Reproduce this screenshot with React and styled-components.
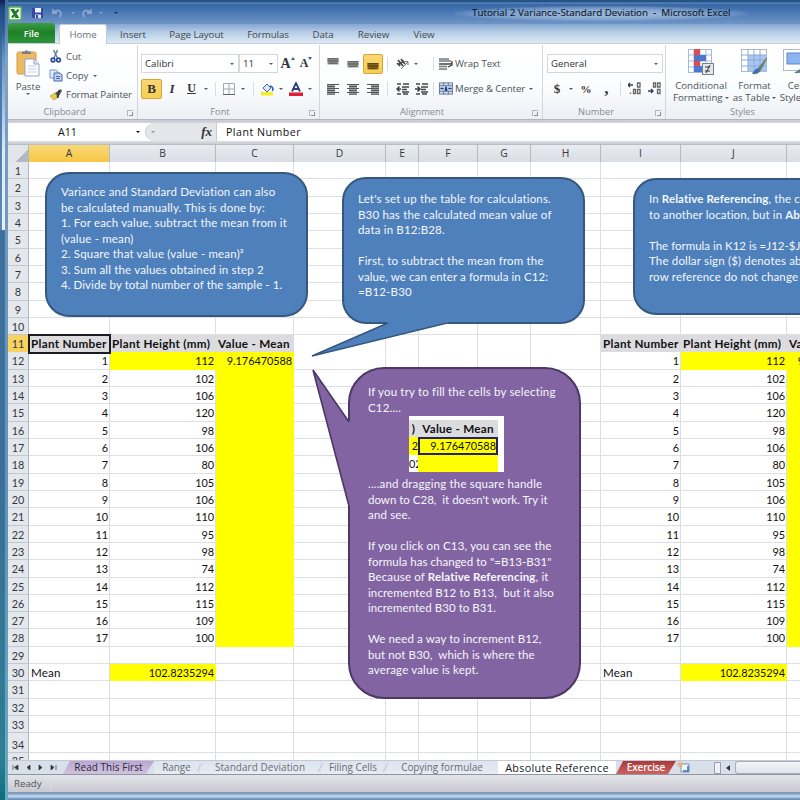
import React from 'react';
import styled, { createGlobalStyle } from 'styled-components';

const Global = createGlobalStyle`
  *{box-sizing:border-box}
  html,body{margin:0;padding:0;width:800px;height:800px;overflow:hidden}
  body{font-family:"Open Sans","Noto Sans",sans-serif;font-size:9.7px;color:#4d525a}
`;

/* ---------- window frame ---------- */
const Desktop = styled.div`
  width:800px;height:800px;overflow:hidden;display:grid;grid-template-columns:8px 792px;
  background:#2d5d92;
`;
const LeftEdge = styled.div`
  display:grid;grid-template-columns:2px 3px 3px;
  background:linear-gradient(#0f1d55 0,#1f4a80 8px,#4577ad 60px,#5f88b4 229px,#3f6f9f 231px,#3b7097 520px,#2d7f94 760px,#0f6d7c 800px);
`;
const EdgeGlow = styled.i`
  grid-column:2;height:230px;background:linear-gradient(transparent 30px,#a9c3dd 110px,#dde9f3 150px,#e6eff6);
`;
const EdgeRim = styled.i`grid-column:3;background:linear-gradient(#3e6aa3,#7ea3cb 60px,#6f98c0 230px,#5f95b8 500px,#6aa9c1);`;
const Window = styled.div`
  display:grid;grid-template-rows:24px 20px 75px 4px 18px 4px 615px 15px 17px 8px;width:792px;overflow:hidden;
`;
const TitleBar = styled.div`
  display:flex;align-items:center;padding:2px 0 0;
  background:linear-gradient(#245487 0,#245487 2px,#6b93c1 3px,#3967a5 4px,#4373b0 10px,#7095c6 24px);
`;
const QuickAccess = styled.div`
  display:flex;align-items:center;width:446px;
  > svg:first-child{margin-right:10px;}
`;
const Title = styled.div`
  font-size:9.8px;color:#101b2e;letter-spacing:0;white-space:pre;line-height:14px;padding:0 18px;height:15px;
  background:radial-gradient(ellipse at center,rgba(205,222,242,.55) 30%,rgba(205,222,242,.28) 60%,transparent 74%);
  -webkit-text-stroke:.15px #101b2e;
`;
const TabStrip = styled.div`
  display:flex;align-items:flex-end;background:linear-gradient(#84a6d1,#b4cce6 8px,#dde9f4);border-bottom:1px solid #c7d0dc;
`;
const FileTab = styled.div`
  width:47px;height:20px;background:linear-gradient(#3b9d42,#1f8029 45%,#2c9438);color:#fff;text-align:center;line-height:22px;font-size:9.2px;font-weight:600;
  border-radius:3px 3px 0 0;
`;
const Tab = styled.div`
  width:${p => p.$w}px;height:19px;line-height:21px;text-align:center;letter-spacing:-.05px;color:#414750;
  ${p => p.$active && 'background:#fff;border:1px solid #c3ccd8;border-bottom:0;margin-left:4px;margin-bottom:-1px;height:20px;border-radius:3px 3px 0 0;color:#6a6f77;line-height:19px;'}
`;

/* ---------- ribbon ---------- */
const Ribbon = styled.div`
  display:flex;background:linear-gradient(#fff,#fcfdfe 55%,#eceff3);overflow:hidden;
`;
const Group = styled.div`
  width:${p => p.$w}px;flex:none;height:74px;margin-top:1px;border-right:1px solid #d3d7dd;display:flex;flex-direction:column;position:relative;
`;
const Body = styled.div`height:60px;display:flex;flex-direction:${p => (p.$row ? 'row' : 'column')};padding-left:${p => p.$pl || 0}px;`;
const Caption = styled.div`
  height:14px;line-height:14px;text-align:center;color:#858b94;font-size:9.3px;padding-right:${p => p.$r || 0}px;
`;
const Launcher = styled.i`
  position:absolute;right:4px;bottom:3px;width:6px;height:6px;border-top:1px solid #b3b8c0;border-left:1px solid #b3b8c0;
  &::after{content:"";position:absolute;right:0;bottom:0;width:3px;height:3px;border-right:1px solid #8b919b;border-bottom:1px solid #8b919b;}
`;
const Caret = styled.i`
  display:inline-block;flex:none;width:0;height:0;border:2px solid transparent;border-top:2.5px solid ${p => p.$c || '#555b64'};border-bottom:0;margin:0 ${p => p.$r || 0}px 0 ${p => p.$l || 0}px;vertical-align:2px;
`;
const PasteButton = styled.div`
  width:40px;display:flex;flex-direction:column;align-items:center;padding:4px 0 0 0;line-height:13px;
  svg{margin-bottom:3px;}
`;
const ClipList = styled.div`display:flex;flex-direction:column;padding-top:2px;`;
const ClipItem = styled.div`
  display:flex;align-items:center;height:19px;white-space:nowrap;gap:3px;letter-spacing:-.12px;
  svg{flex:none;}
`;
const ToolRow = styled.div`display:flex;align-items:center;height:25px;margin-top:${p => p.$mt || 0}px;`;
const Combo = styled.div`
  width:${p => p.$w}px;height:19px;border:1px solid #d4d8de;background:#fff;display:flex;align-items:center;justify-content:space-between;padding:0 4px 0 3px;color:#2e3238;
`;
const Slot = styled.div`
  width:${p => p.$w}px;height:20px;display:flex;align-items:center;justify-content:center;flex:none;border-radius:2px;
  ${p => p.$on && 'background:linear-gradient(#fbd675,#f7cf50);border:1px solid #d6a438;'}
`;
const Glyph = styled.span`
  font:700 ${p => p.$s || 12}px "Liberation Serif",serif;font-style:${p => (p.$it ? 'italic' : 'normal')};text-decoration:${p => (p.$u ? 'underline' : 'none')};color:#333;
`;
const Mark = styled.i`
  width:0;height:0;border:2px solid transparent;align-self:flex-start;margin-top:3px;
  ${p => (p.$down ? 'border-top:3px solid #3d5f9c;border-bottom:0;' : 'border-bottom:3px solid #3d5f9c;border-top:0;')}
`;
const Sep = styled.i`width:1px;height:14px;background:#d9dce1;margin:0 ${p => p.$m || 4}px;flex:none;`;
const Label = styled.span`white-space:nowrap;letter-spacing:-.07px;`;
const BigButton = styled.div`
  width:${p => p.$w}px;flex:none;display:flex;flex-direction:column;align-items:center;text-align:center;line-height:11.5px;padding-top:4px;white-space:nowrap;
  svg{margin-bottom:5px;}
`;
const Band = styled.div`background:linear-gradient(${p => p.$c});`;

/* ---------- formula bar ---------- */
const FormulaBar = styled.div`display:flex;align-items:center;background:#fff;color:#111;font-size:10.6px;`;
const NameBox = styled.div`width:137px;display:flex;align-items:center;justify-content:space-between;padding:0 5px 0 50px;`;
const FxArea = styled.div`
  width:72px;height:18px;background:#e4e6ea;display:flex;align-items:center;justify-content:space-between;padding:0 4px 0 5px;border-radius:9px 0 0 9px;border:1px solid #c8ccd2;border-width:0 1px 0 1px;
`;
const FormulaText = styled.div`padding-left:9px;letter-spacing:.5px;`;

/* ---------- sheet ---------- */
const widths = [81, 106, 78, 92, 33, 59, 53, 70, 80, 106, 78];
const template = widths.map(w => w + 'px').join(' ');
const Sheet = styled.div`
  position:relative;width:792px;overflow:hidden;background:#fff;font-family:Lato,"Open Sans",sans-serif;font-size:11px;color:#111;
`;
const HeadRow = styled.div`display:grid;grid-template-columns:21px ${template};height:17px;width:857px;border-bottom:1px solid #9da5b0;`;
const ColHead = styled.div`
  text-align:center;line-height:17px;font-family:"Open Sans",sans-serif;font-size:10.3px;color:#33383f;border-right:1px solid #b4bac4;
  background:${p => (p.$on ? 'linear-gradient(#f9d977,#f6c746)' : 'linear-gradient(#e9ecf1,#d9dde4)')};
`;
const Corner = styled.div`
  background:linear-gradient(135deg,#e2e6eb 66%,#b2b9c4 67%);border-right:1px solid #b4bac4;
`;
const Row = styled.div`display:grid;grid-template-columns:21px ${template};height:${p => p.$h || 17.32}px;width:857px;`;
const RowHead = styled.div`
  background:${p => (p.$on ? '#f8d25e' : '#e4e7ec')};border-right:1px solid #b0b6c0;border-bottom:1px solid #c3c8d0;
  text-align:center;font-size:10.8px;line-height:${p => p.$lh || 17}px;color:#33383f;overflow:hidden;
`;
const Cell = styled.div`
  border-right:1px solid ${p => p.$fill || '#dcdfe5'};border-bottom:1px solid ${p => p.$fill || '#dcdfe5'};
  background:${p => p.$fill || '#fff'};text-align:${p => p.$align || 'right'};font-weight:${p => (p.$bold ? 700 : 400)};
  font-size:${p => (p.$bold ? 11.7 : p.$align ? 11.6 : 10.9)}px;letter-spacing:${p => (p.$bold ? 0.28 : p.$align ? 0.15 : -0.05)}px;line-height:17px;
  padding:0 1px 0 ${p => (p.$align === 'left' ? 2 : 0)}px;white-space:nowrap;overflow:hidden;
  ${p => p.$sel && 'outline:2px solid #1b1b24;outline-offset:-1px;z-index:1;overflow:visible;'}
`;

/* ---------- callouts ---------- */
const Overlay = styled.div`
  position:absolute;left:${p => p.$x}px;top:${p => p.$y}px;width:${p => p.$w}px;height:${p => p.$h}px;z-index:2;
  background:${p => p.$c};border:2px solid ${p => p.$b};border-radius:${p => p.$r}px;color:#f4f7fc;
  padding:${p => p.$pt}px 0 0 ${p => p.$pl}px;
`;
const Line = styled.div`
  height:15.5px;line-height:15.5px;white-space:pre;font-size:11.5px;letter-spacing:${p => (p.$ls === undefined ? 0.17 : p.$ls)}px;
`;
const Tail = styled.svg`position:absolute;left:${p => p.$x}px;top:${p => p.$y}px;z-index:3;overflow:visible;`;
const Snip = styled.div`
  width:95px;height:56px;margin:1px 0 4px 41px;background:#fff;color:#111;display:grid;grid-template-columns:9px 80px;grid-template-rows:4px 17px 18px 17px;overflow:hidden;
`;
const SnipCell = styled.div`
  background:${p => p.$bg || '#fff'};font-size:${p => (p.$b ? 11.7 : 10.9)}px;letter-spacing:${p => (p.$b ? 0.25 : 0)}px;font-weight:${p => (p.$b ? 700 : 400)};line-height:17px;text-align:${p => (p.$b ? 'center' : 'right')};
  white-space:nowrap;overflow:hidden;${p => p.$sel && 'border:2px solid #26215f;line-height:14px;'}
`;

/* ---------- bottom bars ---------- */
const SheetTabs = styled.div`
  display:flex;align-items:stretch;background:#d8e0e9;border-top:1px solid #c2c9d2;border-bottom:1px solid #8e96a2;font-size:9.8px;color:#636a74;
`;
const Nav = styled.div`width:55px;display:flex;align-items:center;padding-left:4px;`;
const SheetTab = styled.div`
  width:${p => p.$w}px;flex:none;line-height:13px;text-align:center;white-space:nowrap;letter-spacing:${p => p.$ls || 0}px;font-size:${p => p.$s || 9.9}px;font-weight:${p => p.$weight || 400};
  color:${p => p.$color || '#666d77'};background:${p => p.$bg || 'linear-gradient(#dce4ec,#e7ecf1)'};
  clip-path:${p => (p.$slant ? 'polygon(7px 0,100% 0,calc(100% - 8px) 100%,0 100%)' : 'none')};
`;
const Slash = styled.i`width:1px;background:#bcc4ce;transform:skewX(-30deg);margin:2px 0;`;
const ScrollBox = styled.div`display:flex;align-items:center;flex:1;margin-left:22px;`;
const Splitter = styled.i`width:7px;height:12px;border:1px solid #99a2ae;background:#eef1f5;`;
const LeftArrow = styled.i`border:3px solid transparent;border-right:4px solid #333;border-left:0;margin:0 5px 0 5px;`;
const Thumb = styled.i`flex:1;height:13px;border:1px solid #a5aebb;border-right:0;border-radius:3px 0 0 3px;background:linear-gradient(#f2f5f8,#dfe5ec);`;
const Status = styled.div`
  display:flex;align-items:center;background:linear-gradient(#e3e4e9,#c9cad1);padding-left:6px;color:#50555d;
`;
const BottomEdge = styled.div`background:linear-gradient(#7f9cbc 0,#7f9cbc 2px,#b5cfe9 3px,#b5cfe9 5px,#6d8fb5 7px);`;

/* ---------- icons ---------- */
const ExcelIcon = () => (
  <svg width="14" height="15" viewBox="0 0 14 15"><rect x=".75" y="1" width="12.500" height="13" rx="1.500" fill="#f3fbf0" stroke="#58b052" strokeWidth="1.500" /><path d="M4 4h1.500l4 7H8zM10.500 3.500L4 11.500" stroke="#1f7a2a" strokeWidth="2" fill="#2b8a35" /></svg>
);
const SaveIcon = () => (
  <svg width="12" height="12" viewBox="0 0 12 12"><path d="M0 1h11v10H1L0 10z" fill="#3847a5" /><rect x="3" y="1" width="6" height="4.500" fill="#f1f4fb" /><rect x="3" y="7.500" width="6" height="3.500" fill="#dfe5f2" /><rect x="4" y="8" width="2" height="3" fill="#3847a5" /></svg>
);
const TurnIcon = ({ flip }) => (
  <svg width="11" height="10" viewBox="0 0 11 10"><g transform={flip ? 'translate(11 0) scale(-1 1)' : undefined}><path d="M1 1v4h4M1.500 4.500C4 1.500 9 2 9 6c0 1.500-1 2.500-2 3" fill="none" stroke="#88a6d0" strokeWidth="1.800" /></g></svg>
);
const PasteIcon = () => (
  <svg width="26" height="28" viewBox="0 0 26 28"><rect x="2" y="3" width="19" height="22" rx="1.500" fill="#eebb62" stroke="#d39a43" /><path d="M7 5V2.500h3Q11.500-.5 13 2.500h3V5z" fill="#7b7f86" /><path d="M10 10h9l5 5v12H10z" fill="#fff" stroke="#8ba4cc" /><path d="M19 10v5h5" fill="#dfe8f5" stroke="#8ba4cc" /><path d="M12.500 17h9M12.500 20h9M12.500 23h9" stroke="#c0cee6" /></svg>
);
const CutIcon = () => (
  <svg width="12" height="13" viewBox="0 0 12 13"><path d="M3.500 0l4 8M7.500 0L4 8" stroke="#6d7f9f" strokeWidth="1.500" /><circle cx="3" cy="10" r="1.800" fill="none" stroke="#2c4c9b" strokeWidth="1.700" /><circle cx="8.500" cy="10" r="1.800" fill="none" stroke="#2c4c9b" strokeWidth="1.700" /></svg>
);
const CopyIcon = () => (
  <svg width="14" height="13" viewBox="0 0 14 13"><path d="M1 1h6l2 2v6H1z" fill="#e5edfa" stroke="#7592cd" /><path d="M5 4h6l2 2v6H5z" fill="#c3d5f3" stroke="#4165b4" /><path d="M7 7.500h4M7 9.500h4" stroke="#4567b0" /></svg>
);
const BrushIcon = () => (
  <svg width="14" height="13" viewBox="0 0 14 13"><path d="M1 8l5-3 3 4-4 3z" fill="#f0cb45" stroke="#a8933d" strokeWidth=".6" /><path d="M6 5l6-4 1 2-4 6z" fill="#59624c" /><path d="M10.500 2L8.500 10" stroke="#33382c" strokeWidth="1.800" /></svg>
);
const AlignIcon = ({ k }) => {
  const v = { t: 1, m: 4, b: 6 }[k];
  if (v !== undefined) return (
    <svg width="12" height="14" viewBox="0 0 12 14"><rect x=".5" y={v} width="11" height="6.500" fill={k === 'b' ? '#8a6a2a' : '#8f8f8e'} /><path d={`M.5 ${v + .6}h11M.5 ${v + 3}h11M2 ${v + 5.400}h8`} stroke={k === 'b' ? '#5f4410' : '#6a6a6a'} strokeWidth="1.300" /></svg>
  );
  const o = { l: 0, c: 2, r: 4 }[k];
  return <svg width="12" height="12" viewBox="0 0 12 12"><rect x={o} y="1" width="8" height="10" fill="#a4a4a4" /><path d={`M0 1.500h12M${o} 3.500h8M0 5.500h12M${o} 7.500h8M0 9.500h12M${o} 11.300h8`} stroke="#555" strokeWidth="1.100" /></svg>;
};
const IndentIcon = ({ right }) => (
  <svg width="13" height="12" viewBox="0 0 13 12"><path d="M1 1h4M7 1h6M6 4h7M6 6.500h5M6 9h7M1 11h4M7 11h5" stroke="#444" strokeWidth="1.600" /><path d={right ? 'M0 6h4M2.500 3.500L5 6 2.500 8.500' : 'M5 6H1M3.500 3.500L1 6l2.500 2.500'} fill="none" stroke="#3a3f48" strokeWidth="1.500" /></svg>
);
const OrientIcon = () => (
  <svg width="14" height="13" viewBox="0 0 14 13"><path d="M2 3l5 6M1 6l3 3M5 2l4 5M3 7l5-3" stroke="#444" strokeWidth="1.700" /><path d="M5 12l7-7M12 8V4.500H8.500" stroke="#777" fill="none" /></svg>
);
const WrapIcon = () => (
  <svg width="14" height="14" viewBox="0 0 14 14"><path d="M0 2h10M0 4h12M0 9.500h8M0 12h8" stroke="#74787f" strokeWidth="1.700" /><path d="M0 7h11q2 0 2-2M13 4v4L9 10" stroke="#444" fill="none" strokeWidth="1.300" /></svg>
);
const MergeIcon = () => (
  <svg width="14" height="13" viewBox="0 0 15 13"><rect x=".5" y=".5" width="14" height="12" fill="#d2def1" stroke="#67799c" /><path d="M0 3.500h15M0 9.500h15M5 0v3M10 0v3M5 10v3M10 10v3" stroke="#5c719c" /><path d="M1.500 6.500h3.500M13.500 6.500h-3.500M6.500 9l1-4.500 1 4.500" stroke="#263c72" strokeWidth="1.500" fill="none" /></svg>
);
const BorderIcon = () => (
  <svg width="12" height="12" viewBox="0 0 12 12"><path d="M.5.5h11v11H.5zM6 0v12M0 6h12" fill="none" stroke="#a3a8b0" /><path d="M0 11.500h12" stroke="#666" /></svg>
);
const FillIcon = () => (
  <svg width="13" height="14" viewBox="0 0 13 14"><rect y="10" width="12" height="3.500" fill="#f3ed2e" /><path d="M2 6l4-4 4 4-4 4z" fill="#dbe6f6" stroke="#48638f" /><path d="M9 4q4 1 2.500 5" stroke="#2d5ebb" strokeWidth="1.600" fill="none" /></svg>
);
const FontColorIcon = () => (
  <svg width="14" height="14" viewBox="0 0 14 14"><rect y="10.500" width="14" height="3.500" fill="#dc2037" /><path d="M3 9.500L7 1l4 8.500M4.500 7h5" stroke="#2a3f7a" strokeWidth="1.800" fill="none" /></svg>
);
const DecimalIcon = ({ dec }) => (
  <svg width="14" height="13" viewBox="0 0 14 13"><path d={dec ? 'M0 9h5M3 7l2 2-2 2' : 'M0 3h5M2 1L0 3l2 2'} stroke="#2f3f66" fill="none" strokeWidth="1.400" /><g fill="none" stroke="#666" strokeWidth="1.300"><path d="M9.500 1h2.500v4H9.500zM9.500 7.500h2.500v4H9.500z" /><path d={dec ? 'M5.500 1h2v4h-2z' : 'M5.500 7.500h2v4h-2zM2.500 10.500v1.500'} /></g></svg>
);
const CondIcon = () => (
  <svg width="26" height="26" viewBox="0 0 26 26"><rect x=".5" y=".5" width="23" height="23" fill="#fff" stroke="#a7b9d9" /><path d="M0 6h24M0 12h24M0 18h24M6 0v24M12 0v24M18 0v24" stroke="#a7b9d9" /><path d="M6 0h6v6H6zM6 12h6v5H6z" fill="#e04b4b" /><path d="M6 6h12v6H6zM6 17h8v6H6z" fill="#4a78d0" /><rect x="14.500" y="14.500" width="11" height="11" fill="#e4e8ee" stroke="#777f8b" /><path d="M17 18h5M17 22h5M22 16l-4 8" stroke="#333" /></svg>
);
const TableIcon = () => (
  <svg width="27" height="26" viewBox="0 0 27 26"><rect x=".5" y=".5" width="25" height="22" fill="#fff" stroke="#a9b9d6" /><path d="M7 6h18v16H7z" fill="#a8c7f3" /><path d="M0 6h25M0 11h25M0 17h25M7 0v22M13 0v22M19 0v22" stroke="#8ea9d6" /><path d="M26 8l-9 11-3 3-3 3q7 1 9-4l6-11z" fill="#6a8068" /><path d="M16 19l-5 5q6 1 8-3z" fill="#3b70c8" /></svg>
);
const StyleIcon = () => (
  <svg width="27" height="26" viewBox="0 0 27 26"><rect x=".5" y=".5" width="26" height="21" fill="#fff" stroke="#a9b9d6" /><rect x="4" y="4" width="22" height="11" fill="#8ab5f0" stroke="#5a85ce" /><path d="M27 10L17 20l-6 4q8 1 11-4z" fill="#5f7c8e" /></svg>
);
const NavIcon = () => (
  <svg width="46" height="9" viewBox="0 0 46 9"><path d="M1 2v5M6 2v5L2.500 4.500zM18 2v5l-3-2.500zM27 2v5l3-2.500zM39 2v5l3-2.500zM44 2v5" fill="#333" stroke="#333" strokeWidth=".7" /></svg>
);
const NewSheetIcon = () => (
  <svg width="16" height="13" viewBox="0 0 16 13"><path d="M5 3h8v8H5z" fill="#f4f7fb" stroke="#6e8fc4" /><path d="M12 5v5H7" fill="none" stroke="#3e6db5" strokeWidth="1.500" /><path d="M4 0v7M.5 3.500h7M1.500 1l5 5M6.500 1l-5 5" stroke="#dfb274" /></svg>
);

/* ---------- data ---------- */
const heights = [112, 102, 106, 120, 98, 106, 80, 105, 106, 110, 95, 98, 74, 112, 115, 109, 100];
const Y = '#ffff00';
const G = '#dcdcdf';
function cellsFor(n) {
  const cells = widths.map(() => ({}));
  const place = offset => {
    if (n === 11) {
      ['Plant Number', 'Plant Height (mm)', 'Value - Mean'].forEach((t, i) => {
        cells[offset + i] = { t, $bold: true, $fill: G, $align: 'left' };
      });
    }
    if (n >= 12 && n <= 28) {
      cells[offset] = { t: n - 11 };
      cells[offset + 1] = { t: heights[n - 12], $fill: n === 12 ? Y : undefined };
      cells[offset + 2] = { t: n === 12 ? '9.176470588' : '', $fill: Y };
    }
    if (n === 30) {
      cells[offset] = { t: 'Mean', $align: 'left' };
      cells[offset + 1] = { t: '102.8235294', $fill: Y };
    }
  };
  place(0);
  place(8);
  if (n === 11) cells[0].$sel = true;
  return cells;
}

const tabs = [['Insert', 52], ['Page Layout', 75], ['Formulas', 68], ['Data', 42], ['Review', 59], ['View', 42]];
const blue = { $c: '#4e80bc', $b: '#36587f' };

export default function App() {
  return (
    <>
      <Global />
      <Desktop>
        <LeftEdge><EdgeGlow /><EdgeRim /></LeftEdge>
        <Window>
          <TitleBar>
            <QuickAccess>
              <ExcelIcon /><SaveIcon />
              <Slot $w={27}><TurnIcon /></Slot><Caret $c="#86a2ca" /><Slot $w={22}><TurnIcon flip /></Slot><Caret $l={2} $c="#86a2ca" /><Caret $l={11} $c="#1c2c49" />
            </QuickAccess>
            <Title>Tutorial 2 Variance-Standard Deviation  -  Microsoft Excel</Title>
          </TitleBar>
          <TabStrip>
            <FileTab>File</FileTab>
            <Tab $w={48} $active>Home</Tab>
            {tabs.map(([t, w]) => <Tab key={t} $w={w}>{t}</Tab>)}
          </TabStrip>
          <Ribbon>
            <Group $w={130}>
              <Body $row>
                <PasteButton><PasteIcon />Paste<Caret /></PasteButton>
                <ClipList>
                  <ClipItem><Slot $w={15}><CutIcon /></Slot>Cut</ClipItem>
                  <ClipItem><Slot $w={15}><CopyIcon /></Slot>Copy <Caret $l={2} /></ClipItem>
                  <ClipItem><Slot $w={15}><BrushIcon /></Slot>Format Painter</ClipItem>
                </ClipList>
              </Body>
              <Caption $r={16}>Clipboard</Caption><Launcher />
            </Group>
            <Group $w={182}>
              <Body $pl={3}>
                <ToolRow $mt={6}>
                  <Combo $w={98}>Calibri<Caret /></Combo><Combo $w={39}>11<Caret /></Combo>
                  <Slot $w={19}><Glyph $s={14}>A</Glyph><Mark /></Slot><Slot $w={18}><Glyph $s={12}>A</Glyph><Mark $down /></Slot>
                </ToolRow>
                <ToolRow>
                  <Slot $w={21} $on><Glyph $s={13}>B</Glyph></Slot>
                  <Slot $w={20}><Glyph $s={13} $it>I</Glyph></Slot>
                  <Slot $w={19}><Glyph $s={12} $u>U</Glyph></Slot>
                  <Caret $l={3} $r={3} /><Sep /><Slot $w={17}><BorderIcon /></Slot><Caret $l={4} $r={4} /><Sep />
                  <Slot $w={19}><FillIcon /></Slot><Caret $l={2} /><Slot $w={25}><FontColorIcon /></Slot><Caret />
                </ToolRow>
              </Body>
              <Caption $r={17}>Font</Caption><Launcher />
            </Group>
            <Group $w={223}>
              <Body $pl={3}>
                <ToolRow $mt={6}>
                  <Slot $w={20}><AlignIcon k="t" /></Slot><Slot $w={20}><AlignIcon k="m" /></Slot><Slot $w={20} $on><AlignIcon k="b" /></Slot>
                  <Sep $m={4} /><Slot $w={22}><OrientIcon /></Slot><Caret $r={13} /><Sep $m={2} />
                  <Slot $w={19}><WrapIcon /></Slot><Label>Wrap Text</Label>
                </ToolRow>
                <ToolRow>
                  <Slot $w={20}><AlignIcon k="l" /></Slot><Slot $w={20}><AlignIcon k="c" /></Slot><Slot $w={20}><AlignIcon k="r" /></Slot>
                  <Sep $m={4} /><Slot $w={20}><IndentIcon /></Slot><Slot $w={19}><IndentIcon right /></Slot><Sep $m={2} />
                  <Slot $w={19}><MergeIcon /></Slot><Label>Merge &amp; Center</Label><Caret $l={4} />
                </ToolRow>
              </Body>
              <Caption $r={18}>Alignment</Caption><Launcher />
            </Group>
            <Group $w={123}>
              <Body $pl={4}>
                <ToolRow $mt={6}><Combo $w={116}>General<Caret /></Combo></ToolRow>
                <ToolRow>
                  <Slot $w={20}><Glyph $s={13}>$</Glyph></Slot><Caret $l={2} $r={3} /><Slot $w={20}><Glyph $s={11}>%</Glyph></Slot>
                  <Slot $w={21}><Glyph $s={16}>,</Glyph></Slot><Sep $m={3} /><Slot $w={22}><DecimalIcon /></Slot><Slot $w={17}><DecimalIcon dec /></Slot>
                </ToolRow>
              </Body>
              <Caption $r={16}>Number</Caption><Launcher />
            </Group>
            <Group $w={170}>
              <Body $row $pl={4}>
                <BigButton $w={62}><CondIcon /><div>Conditional<br />Formatting <Caret /></div></BigButton>
                <BigButton $w={45}><TableIcon /><div>Format<br />as Table <Caret /></div></BigButton>
                <BigButton $w={38}><StyleIcon /><div>Cell<br />Styles <Caret /></div></BigButton>
              </Body>
              <Caption $r={16}>Styles</Caption>
            </Group>
          </Ribbon>
          <Band $c="#9ba2ad,#c8cbd0 1px,#d2d4d9" />
          <FormulaBar>
            <NameBox>A11<Caret $c="#111" /></NameBox>
            <FxArea><Caret $c="#8d929b" /><Glyph $s={13} $it>fx</Glyph></FxArea>
            <FormulaText>Plant Number</FormulaText>
          </FormulaBar>
          <Band $c="#dcdee3,#c9ccd2 3px,#a8aeb8" />
          <Sheet>
            <HeadRow>
              <Corner />
              {widths.map((w, i) => <ColHead key={i} $on={i === 0}>{'ABCDEFGHIJK'[i]}</ColHead>)}
            </HeadRow>
            {Array.from({ length: 35 }, (_, i) => i + 1).map(n => (
              <Row key={n} $h={n === 34 ? 20 : undefined}>
                <RowHead $on={n === 11} $lh={n === 34 ? 23 : n === 35 ? 15 : 17}>{n}</RowHead>
                {cellsFor(n).map(({ t, ...rest }, i) => <Cell key={i} {...rest}>{t}</Cell>)}
              </Row>
            ))}

            <Overlay {...blue} $x={37} $y={27} $w={263} $h={145} $r={24} $pt={10} $pl={14}>
              <Line>Variance and Standard Deviation can also</Line>
              <Line>be calculated manually. This is done by:</Line>
              <Line>1. For each value, subtract the mean from it</Line>
              <Line>(value - mean)</Line>
              <Line>2. Square that value (value - mean)²</Line>
              <Line>3. Sum all the values obtained in step 2</Line>
              <Line $ls={0.07}>4. Divide by total number of the sample - 1.</Line>
            </Overlay>

            <Overlay {...blue} $x={334} $y={32} $w={243} $h={147} $r={24} $pt={12} $pl={14}>
              <Line>Let's set up the table for calculations.</Line>
              <Line>B30 has the calculated mean value of</Line>
              <Line>data in B12:B28.</Line>
              <Line />
              <Line>First, to subtract the mean from the</Line>
              <Line $ls={0.1}>value, we can enter a formula in C12:</Line>
              <Line>=B12-B30</Line>
            </Overlay>
            <Tail $x={303} $y={176} width="140" height="36" viewBox="0 0 140 36">
              <path d="M76 2L1 35L137 2V0H76z" fill="#4e80bc" /><path d="M77 2L1 35L136 2" fill="none" stroke="#36587f" strokeWidth="1.600" />
            </Tail>

            <Overlay {...blue} $x={625} $y={33} $w={260} $h={137} $r={23} $pt={11} $pl={14}>
              <Line $ls={0.1}>In <b>Relative Referencing</b>, the cell</Line>
              <Line $ls={0.1}>to another location, but in <b>Absolute</b></Line>
              <Line />
              <Line $ls={0}>The formula in K12 is =J12-$J$30</Line>
              <Line>The dollar sign ($) denotes absolute</Line>
              <Line>row reference do not change</Line>
            </Overlay>

            <Overlay $c="#8364a2" $b="#4c3864" $x={340} $y={222} $w={233} $h={332} $r={36} $pt={15} $pl={18}>
              <Line>If you try to fill the cells by selecting</Line>
              <Line>C12....</Line>
              <Snip>
                <SnipCell /><SnipCell />
                <SnipCell $bg={G} $b>)</SnipCell><SnipCell $bg={G} $b>Value - Mean</SnipCell>
                <SnipCell $bg={Y}>2</SnipCell><SnipCell $bg={Y} $sel>9.176470588</SnipCell>
                <SnipCell>02</SnipCell><SnipCell $bg={Y} />
              </Snip>
              <Line>....and dragging the square handle</Line>
              <Line $ls={0}>down to C28,  it doesn't work. Try it</Line>
              <Line>and see.</Line>
              <Line />
              <Line>If you click on C13, you can see the</Line>
              <Line $ls={0.05}>formula has changed to "=B13-B31"</Line>
              <Line $ls={0.15}>Because of <b>Relative Referencing</b>, it</Line>
              <Line $ls={0.1}>incremented B12 to B13,  but it also</Line>
              <Line $ls={0.05}>incremented B30 to B31.</Line>
              <Line />
              <Line $ls={0.1}>We need a way to increment B12,</Line>
              <Line $ls={0.1}>but not B30,  which is where the</Line>
              <Line>average value is kept.</Line>
            </Overlay>
            <Tail $x={304} $y={224} width="40" height="140" viewBox="0 0 40 140">
              <path d="M37 52L1 1L37 137L40 137V52z" fill="#8364a2" /><path d="M37 53L1 1L37 137" fill="none" stroke="#4c3864" strokeWidth="1.600" />
            </Tail>
          </Sheet>
          <SheetTabs>
            <Nav><NavIcon /></Nav>
            <SheetTab $w={91} $slant $bg="linear-gradient(#b9a6d0,#cfc3df)" $color="#2c2738" $ls={0.1}>Read This First</SheetTab>
            <SheetTab $w={45}>Range</SheetTab><Slash />
            <SheetTab $w={120} $ls={0.1}>Standard Deviation</SheetTab><Slash />
            <SheetTab $w={64}>Filing Cells</SheetTab><Slash />
            <SheetTab $w={112}>Copying formulae</SheetTab>
            <SheetTab $w={118} $bg="#fff" $color="#15181d" $s={10.8} $ls={0.32}>Absolute Reference</SheetTab>
            <SheetTab $w={60} $slant $weight={600} $bg="linear-gradient(#a83a3a,#d06060)" $color="#fff" $ls={-0.1}>Exercise</SheetTab>
            <NewSheetIcon />
            <ScrollBox><Splitter /><LeftArrow /><Thumb /></ScrollBox>
          </SheetTabs>
          <Status>Ready<Sep $m={8} /></Status>
          <BottomEdge />
        </Window>
      </Desktop>
    </>
  );
}
